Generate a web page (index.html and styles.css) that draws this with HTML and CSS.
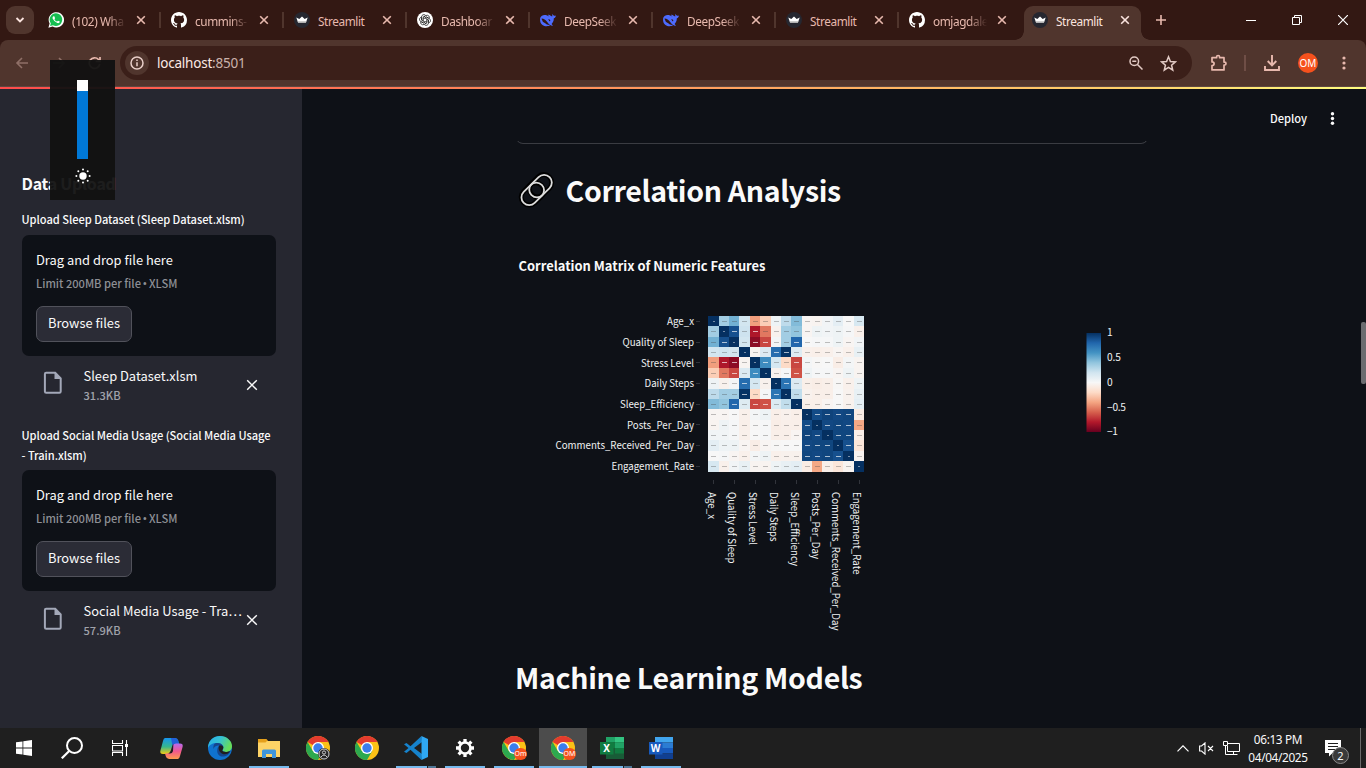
FILE: index.html
```html
<!DOCTYPE html>
<html lang="en">
<head>
<meta charset="utf-8">
<title>Streamlit</title>
<link rel="stylesheet" href="styles.css">
</head>
<body>
<svg class="defs" width="0" height="0">
  <symbol id="i-close" viewBox="0 0 10 10"><path d="M1.200 1.200l7.600 7.600M8.800 1.200L1.200 8.800" fill="none" stroke="currentColor" stroke-width="1.600"/></symbol>
  <symbol id="i-del" viewBox="0 0 12 12"><path d="M1.200 1.200l9.600 9.600M10.800 1.200L1.200 10.800" fill="none" stroke="#fafafa" stroke-width="1.400"/></symbol>
  <symbol id="i-github" viewBox="0 0 16 16"><path fill="#fff" d="M8 0C3.58 0 0 3.58 0 8c0 3.54 2.29 6.53 5.47 7.59.4.07.55-.17.55-.38 0-.19-.01-.82-.01-1.49-2.01.37-2.53-.49-2.69-.94-.09-.23-.48-.94-.82-1.13-.28-.15-.68-.52-.01-.53.63-.01 1.08.58 1.23.82.72 1.21 1.87.87 2.33.66.07-.52.28-.87.51-1.07-1.78-.2-3.64-.89-3.64-3.95 0-.87.31-1.59.82-2.15-.08-.2-.36-1.02.08-2.12 0 0 .67-.21 2.2.82.64-.18 1.32-.27 2-.27s1.36.09 2 .27c1.53-1.04 2.2-.82 2.2-.82.44 1.1.16 1.92.08 2.12.51.56.82 1.27.82 2.15 0 3.07-1.87 3.75-3.65 3.95.29.25.54.73.54 1.48 0 1.07-.01 1.93-.01 2.2 0 .21.15.46.55.38A8.01 8.01 0 0 0 16 8c0-4.42-3.58-8-8-8z"/></symbol>
  <symbol id="i-crown" viewBox="0 0 16 16"><circle cx="8" cy="8" r="8" fill="#262730"/><path d="M2.300 5.400l3 1.500L8 4.400l2.700 2.500 3-1.500-1.700 5.200H4z" fill="#fff"/><path d="M3.700 9.300h8.600l-.4 1.400H4.100z" fill="#bbb"/></symbol>
  <symbol id="i-deepseek" viewBox="0 0 16 16"><path fill="#4d6bfe" d="M15.900 3.400c-.8.5-1.300.5-2 .2-.8-.4-1-.9-1.600-1.900-.1 1.100-.2 1.900.3 2.600-.8.1-1.200-.1-1.900-.6C9.500 2.900 8.600 2.600 7.800 3c.6.5 1.300 1 1.600 1.600C6.800 2.900 3.900 2.300 1.600 4 .2 5-.2 7 .2 9.200c.6 3.200 3.400 5 6.400 5 1.600 0 2.600-.4 3.700-1.200.8.7 1.700.8 2.800.6-.4-.6-.9-1-1.500-1.700 1.500-1.700 2.300-3.300 2.200-5.600 1.300-.6 2-1.300 2.100-2.900z"/><path fill="#331813" d="M1.600 6.500c2.300.1 4 1.400 5.600 3.500 1 1.300 1.800 2.200 2.800 2.900-2.200.3-3.500-.6-4.700-1.700C4 10 3 10.500 2.700 9.400 2.300 8 1.600 7.800 1.600 6.500zM8.200 7.300c1-.4 1.900.3 2.200 1.600-.5.1-.7.3-1 .4-.2-1-.9-1.200-1.200-2z"/></symbol>
  <symbol id="i-file" viewBox="0 0 20 24"><path d="M3.200 1.700h9l5.500 5.600v13.200q0 1.300-1.300 1.300H3.200q-1.300 0-1.300-1.300V3q0-1.300 1.300-1.300z" fill="none" stroke="#a3a8b8" stroke-width="2"/><path d="M11.500 1.500v6.600h6.500z" fill="#a3a8b8"/></symbol>
  <symbol id="i-chrome" viewBox="0 0 24 24"><circle cx="12" cy="12" r="12" fill="#fbc116"/><path d="M12 12L1.600 6A12 12 0 0 1 22.400 6H12z" fill="#e33b2e"/><path d="M1.600 6A12 12 0 0 0 12 24L17.200 15 12 12 6.800 15z" fill="#2da94f"/><circle cx="12" cy="12" r="6" fill="#fff"/><circle cx="12" cy="12" r="4.700" fill="#3b7ded"/></symbol>
</svg>

<header class="browser">
  <div class="tabstrip">
    <div class="tabsearch"><svg width="10" height="10" viewBox="0 0 10 10"><path d="M1.500 3L5 6.500 8.500 3" fill="none" stroke="#fbe4df" stroke-width="1.800"/></svg></div>
    <div class="tab sep"><svg class="fav" viewBox="0 0 16 16"><path d="M.4 15.700l1.200-4.100A7.700 7.700 0 1 1 4.600 14.600z" fill="#fff"/><path d="M2.100 13.900l.7-2.600A6.300 6.300 0 1 1 5 13.200z" fill="#16bf51"/><path d="M5.500 4.200c-1 .5-1.200 1.700-.6 2.900a8.300 8.300 0 0 0 4.400 4c1.300.4 2.300-.2 2.500-1.500L10 8.700l-.9.900C7.900 9.200 7 8.300 6.400 7.200l.7-.9-.8-2z" fill="#fff"/></svg><span class="ttl fade">(102) Wha</span><svg class="x"><use href="#i-close"/></svg></div>
    <div class="tab sep"><svg class="fav"><use href="#i-github"/></svg><span class="ttl fade">cummins-</span><svg class="x"><use href="#i-close"/></svg></div>
    <div class="tab sep"><svg class="fav"><use href="#i-crown"/></svg><span class="ttl">Streamlit</span><svg class="x"><use href="#i-close"/></svg></div>
    <div class="tab sep"><svg class="fav" viewBox="0 0 16 16"><circle cx="8" cy="8" r="8" fill="#fff"/><g fill="none" stroke="#222" stroke-width=".8"><g id="petal"><path d="M6.200 9V5.200L9 3.500c2-1 4 .9 3.200 2.800M6.200 5.200L8 4.200"/></g><use href="#petal" transform="rotate(60 8 8)"/><use href="#petal" transform="rotate(120 8 8)"/><use href="#petal" transform="rotate(180 8 8)"/><use href="#petal" transform="rotate(240 8 8)"/><use href="#petal" transform="rotate(300 8 8)"/></g></svg><span class="ttl fade">Dashboar</span><svg class="x"><use href="#i-close"/></svg></div>
    <div class="tab sep"><svg class="fav"><use href="#i-deepseek"/></svg><span class="ttl fade">DeepSeek</span><svg class="x"><use href="#i-close"/></svg></div>
    <div class="tab sep"><svg class="fav"><use href="#i-deepseek"/></svg><span class="ttl fade">DeepSeek</span><svg class="x"><use href="#i-close"/></svg></div>
    <div class="tab sep"><svg class="fav"><use href="#i-crown"/></svg><span class="ttl">Streamlit</span><svg class="x"><use href="#i-close"/></svg></div>
    <div class="tab"><svg class="fav"><use href="#i-github"/></svg><span class="ttl fade">omjagdale</span><svg class="x"><use href="#i-close"/></svg></div>
    <div class="tab active"><svg class="fav"><use href="#i-crown"/></svg><span class="ttl">Streamlit</span><svg class="x"><use href="#i-close"/></svg></div>
    <svg class="newtab" viewBox="0 0 12 12"><path d="M6 1v10M1 6h10" stroke="#e8b9ae" stroke-width="1.600"/></svg>
    <div class="winctl">
      <svg width="10" height="10"><path d="M0 5.500h10" stroke="#fff"/></svg>
      <svg width="10" height="10" viewBox="0 0 10 10"><path d="M.5 2.500h7v7h-7zM2.500 2.500v-2h7v7h-2" fill="none" stroke="#fff"/></svg>
      <svg width="10" height="10" viewBox="0 0 10 10"><path d="M0 0l10 10M10 0L0 10" stroke="#fff" stroke-width="1.200"/></svg>
    </div>
  </div>
  <div class="toolbar">
    <svg class="nav" viewBox="0 0 14 14"><path d="M13 7H2M7 2L2 7l5 5" fill="none" stroke="#8f6f67" stroke-width="1.600"/></svg>
    <svg class="nav" viewBox="0 0 14 14"><path d="M1 7h11M7 2l5 5-5 5" fill="none" stroke="#8f6f67" stroke-width="1.600"/></svg>
    <svg class="nav" viewBox="0 0 14 14"><path d="M11.800 8A5.300 5.300 0 1 1 10.500 3.500L12 5M12 1v4.300H7.700" fill="none" stroke="#e8b9ae" stroke-width="1.700"/></svg>
    <div class="omnibox">
      <span class="info"><svg width="14" height="14" viewBox="0 0 14 14"><circle cx="7" cy="7" r="6" fill="none" stroke="#e9cfc9" stroke-width="1.500"/><path d="M7 6.200v4M7 3.500v1.500" stroke="#e9cfc9" stroke-width="1.500"/></svg></span>
      <span class="url">localhost<i>:8501</i></span>
      <svg class="mag" viewBox="0 0 14 14"><circle cx="5.300" cy="5.300" r="4.300" fill="none" stroke="#e3cbc5" stroke-width="1.500"/><path d="M3.300 5.300h4M8.500 8.500l5 5" stroke="#e3cbc5" stroke-width="1.500"/></svg>
      <svg class="star" viewBox="0 0 16 16"><path d="M8 1.700l1.800 4.400 4.700.4-3.600 3.100 1.100 4.600L8 11.700l-4 2.500 1.100-4.600-3.600-3.100 4.700-.4z" fill="none" stroke="#e3cbc5" stroke-width="1.400"/></svg>
    </div>
    <svg class="ext" viewBox="0 0 18 18"><path d="M2 3.700h4.600V3q0-1.500 1.500-1.500T9.600 3v.7H14v4.400h.6q1.400 0 1.400 1.400T14.600 11H14v4.900H2v-4.300c2.800 0 2.800-3.700 0-3.700z" fill="none" stroke="#e8b9ae" stroke-width="1.700" stroke-linejoin="round"/></svg>
    <span class="bar"></span>
    <svg class="dl" viewBox="0 0 16 16"><path d="M8 0v10M3.700 6L8 10.300 12.300 6M1 11v4h14v-4" fill="none" stroke="#e8b9ae" stroke-width="1.900"/></svg>
    <span class="avatar">OM</span>
    <svg class="kebab" viewBox="0 0 4 14"><g fill="#e8b9ae"><circle cx="2" cy="2" r="1.600"/><circle cx="2" cy="7" r="1.600"/><circle cx="2" cy="12" r="1.600"/></g></svg>
  </div>
</header>
<div class="rainbow"></div>

<div class="app">
  <aside class="sidebar">
    <h2 class="side-title">Data Upload</h2>
    <label class="lbl">Upload Sleep Dataset (Sleep Dataset.xlsm)</label>
    <section class="drop">
      <p class="drop-t">Drag and drop file here</p>
      <p class="drop-s">Limit 200MB per file <span class="dot">•</span> XLSM</p>
      <button class="browse">Browse files</button>
    </section>
    <div class="file">
      <svg class="doc"><use href="#i-file"/></svg>
      <div class="meta"><p class="name">Sleep Dataset.xlsm</p><p class="size">31.3KB</p></div>
      <svg class="del"><use href="#i-del"/></svg>
    </div>
    <label class="lbl two">Upload Social Media Usage (Social Media Usage<br>- Train.xlsm)</label>
    <section class="drop second">
      <p class="drop-t">Drag and drop file here</p>
      <p class="drop-s">Limit 200MB per file <span class="dot">•</span> XLSM</p>
      <button class="browse">Browse files</button>
    </section>
    <div class="file">
      <svg class="doc low"><use href="#i-file"/></svg>
      <div class="meta"><p class="name">Social Media Usage - Tra…</p><p class="size">57.9KB</p></div>
      <svg class="del"><use href="#i-del"/></svg>
    </div>
  </aside>
  <main class="main">
    <div class="apphead"><span class="deploy">Deploy</span><svg width="5" height="13" viewBox="0 0 5 13"><g fill="#fafafa"><circle cx="2.500" cy="1.800" r="1.700"/><circle cx="2.500" cy="6.500" r="1.700"/><circle cx="2.500" cy="11.200" r="1.700"/></g></svg></div>
    <div class="frame"></div>
    <h2 class="h2 link-h"><svg class="link" viewBox="0 0 36 36"><g fill="none" transform="rotate(-45 18 18)"><g stroke="#000" stroke-width="5"><rect x="-.5" y="9.500" width="25" height="16" rx="8"/><rect x="11" y="9.500" width="25" height="16" rx="8"/></g><g stroke="#dcdcdc" stroke-width="1.800"><rect x="-.5" y="10" width="25.500" height="15.500" rx="7.700"/><rect x="10.500" y="10" width="25.500" height="15.500" rx="7.700"/></g></g></svg><span>Correlation Analysis</span></h2>
    <svg class="chart" width="632" height="400" viewBox="516 244 632 400">
      <defs><linearGradient id="rdbu" x1="0" y1="0" x2="0" y2="1"><stop offset="0" stop-color="#053061"/><stop offset=".1" stop-color="#2166ac"/><stop offset=".2" stop-color="#4393c3"/><stop offset=".3" stop-color="#92c5de"/><stop offset=".4" stop-color="#d1e5f0"/><stop offset=".5" stop-color="#f7f7f7"/><stop offset=".6" stop-color="#fddbc7"/><stop offset=".7" stop-color="#f4a582"/><stop offset=".8" stop-color="#d6604d"/><stop offset=".9" stop-color="#b2182b"/><stop offset="1" stop-color="#67001f"/></linearGradient></defs>
      <text class="ctitle" x="518.500" y="271" textLength="247" lengthAdjust="spacingAndGlyphs">Correlation Matrix of Numeric Features</text>
      <g id="heat"></g>
      <g id="axes" class="axis"></g>
      <rect x="1086.500" y="333" width="14.500" height="99" fill="url(#rdbu)"/>
      <g class="axis"><text x="1107" y="336">1</text><text x="1107" y="361" textLength="14">0.5</text><text x="1107" y="386">0</text><text x="1107" y="411" textLength="19">−0.5</text><text x="1107" y="435" textLength="11">−1</text></g>
    </svg>
    <h2 class="h2 ml">Machine Learning Models</h2>
    <span class="scroll"></span>
  </main>
</div>

<footer class="taskbar">
  <div class="slot"><svg width="16" height="16" viewBox="0 0 16 16"><path fill="#fff" d="M0 2.300L6.500 1.400V7.600H0zM7.300 1.300L16 0v7.600H7.300zM0 8.400h6.500v6.200L0 13.700zM7.300 8.400H16V16l-8.700-1.300z"/></svg></div>
  <div class="slot"><svg width="22" height="22" viewBox="0 0 22 22"><circle cx="13.500" cy="8.500" r="7.500" fill="none" stroke="#fff" stroke-width="2"/><path d="M8.200 14L.8 21.300" stroke="#fff" stroke-width="2.200"/></svg></div>
  <div class="slot"><svg width="16" height="16" viewBox="0 0 16 16"><path d="M.5 0v3.500h10V0M.5 16v-3.500h10V16M.500 5.500h10v5.500H.5zM14.500 0v16" fill="none" stroke="#fff" stroke-width="1.100"/><path d="M13 4h3v3h-3z" fill="#fff"/></svg></div>
  <div class="apps">
    <div class="slot"><svg width="23" height="21" viewBox="0 0 23 21"><defs><linearGradient id="cpa" x1="0" y1="0" x2="0" y2="1"><stop offset="0" stop-color="#1795ef"/><stop offset=".55" stop-color="#36b78d"/><stop offset="1" stop-color="#f3cd13"/></linearGradient><linearGradient id="cpb" x1="0" y1="1" x2="0" y2="0"><stop offset="0" stop-color="#ff9c4c"/><stop offset=".5" stop-color="#f2588d"/><stop offset="1" stop-color="#b46bf0"/></linearGradient></defs><path d="M5 0h10q2.500 0 3.200 2.500L19 6h-4q-2 0-2.800 2.500L11 13q-1 3-4 3H3q-3.500 0-2.500-3.700L3 3q.7-3 2-3z" fill="url(#cpa)"/><path d="M11 0h4q2.500 0 3.200 2.500L19 6h-4q-1.700 0-2.500 2z" fill="#2260d8"/><path d="M18 21H9q-2.500 0-3.200-2.700L5 15.500h2.500Q10 15.500 11 12l1.200-4Q13 5.500 16 5.500h4q3.500 0 2.500 3.700L20 18q-.7 3-2 3z" fill="url(#cpb)"/><path d="M11 12l1.200-4q.4-1.300 1.200-1.900L13 13q-.6 2.500-3 2.500H8.500Q10.300 14.500 11 12z" fill="#1f1f1f"/></svg></div>
    <div class="slot"><svg width="24" height="24" viewBox="0 0 24 24"><defs><linearGradient id="eg" x1="0" y1="0" x2="1" y2=".4"><stop offset="0" stop-color="#28aee8"/><stop offset=".5" stop-color="#35c1d4"/><stop offset="1" stop-color="#67dd59"/></linearGradient></defs><circle cx="12" cy="12" r="12" fill="#0f72cf"/><path d="M0 11C.5 4.500 5.500 0 12 0c7 0 12 5 12 10 0 4-3 6-6 6-2.500 0-3.700-.8-3.700-1.700 0-.8 1-1 1-3C15.300 8.500 12 7 8.700 7 4.500 7 1 9 0 12z" fill="url(#eg)"/><path d="M8.700 7C12 7 15.300 8.500 15.300 11.300c0 2-1 2.200-1 3 0 .9 1.200 1.700 3.700 1.700 2.500 0 4-1 4.600-1.300-1.600 5.600-8 7-11 5S8.500 12.500 11 9.500C9 9.300 6.500 10 5.500 13 5 9 6.500 7 8.700 7z" fill="#15458c"/><path d="M11.500 9.600c1.700-.3 3.800.2 3.800 1.900 0 1.800-1 2-1 2.800 0 .9 1.200 1.700 3.700 1.700 2.500 0 3.700-.7 4.300-1.200-1.500 3.200-5 4.200-7.500 3.200-4-1.500-5-5.800-3.300-8.400z" fill="#1f1f1f"/></svg></div>
    <div class="slot run"><svg width="22" height="19" viewBox="0 0 22 19"><path d="M0 0h8.500l2 2.500H0z" fill="#e5a01b"/><path d="M0 2h22v16H0z" fill="#fdd366"/><path d="M0 2h9L7.500 3.500H0z" fill="#e5a01b"/><path d="M4 19v-7q0-1.500 1.500-1.500h11q1.500 0 1.500 1.500v7h-4v-4H8v4z" fill="#3e95dc"/></svg></div>
    <div class="slot"><svg width="24" height="24"><use href="#i-chrome"/><circle cx="18" cy="18" r="6" fill="#252525"/><circle cx="18" cy="18" r="5" fill="none" stroke="#ccc"/><circle cx="18" cy="16.500" r="1.600" fill="none" stroke="#ccc"/><path d="M15 21q3-4 6 0" fill="none" stroke="#ccc"/></svg></div>
    <div class="slot"><svg width="24" height="24"><use href="#i-chrome"/></svg></div>
    <div class="slot run multi"><svg width="24" height="24" viewBox="0 0 24 24"><path d="M17.500 0L6.500 10.200 2.500 7 0 8.200 4.500 12 0 15.800 2.500 17l4-3.200L17.500 24l.5-6-8-6 8-6z" fill="#1683cd"/><path d="M17.500 0L24 3v18l-6.500 3z" fill="#2fa8f3"/></svg></div>
    <div class="slot run"><svg width="20" height="20" viewBox="-10 -10 20 20"><circle r="5.500" fill="none" stroke="#fff" stroke-width="2.600"/><g stroke="#fff" stroke-width="3.300"><path d="M0-6v-3M0 6v3M-6 0h-3M6 0h3M4.300-4.300l2.100-2.100M-4.300-4.300l-2.100-2.100M4.300 4.300l2.100 2.100M-4.300 4.300l-2.100 2.100"/></g></svg></div>
    <div class="slot run"><span class="ic"><svg width="24" height="24"><use href="#i-chrome"/></svg><b class="pill">Om</b></span></div>
    <div class="slot run on"><span class="ic"><svg width="24" height="24"><use href="#i-chrome"/></svg><b class="pill">OM</b></span></div>
    <div class="slot run multi"><span class="ic"><svg width="24" height="22" viewBox="0 0 24 22"><path d="M6 0h18v5.500H6z" fill="#21a366"/><path d="M15 0h9v5.500h-9z" fill="#33c481"/><path d="M6 5.500h18V11H6z" fill="#107c41"/><path d="M15 5.500h9V11h-9z" fill="#21a366"/><path d="M6 11h18v11H6z" fill="#185c37"/><path d="M15 11h9v5.500h-9z" fill="#107c41"/><path d="M0 5h13.500v12.500H0z" fill="#107c41"/></svg><b class="ltr">X</b></span></div>
    <div class="slot run"><span class="ic"><svg width="24" height="22" viewBox="0 0 24 22"><path d="M6 0h18v5.500H6z" fill="#41a5ee"/><path d="M6 5.500h18V11H6z" fill="#2b7cd3"/><path d="M6 11h18v5.500H6z" fill="#185abd"/><path d="M6 16.500h18V22H6z" fill="#103f91"/><path d="M0 5h13.500v12.500H0z" fill="#185abd"/></svg><b class="ltr">W</b></span></div>
  </div>
  <div class="tray">
    <svg width="12" height="7" viewBox="0 0 12 7"><path d="M.5 6.300L6 .8l5.500 5.500" fill="none" stroke="#fff" stroke-width="1.200"/></svg>
    <svg width="15" height="13" viewBox="0 0 15 13"><path d="M.6 4h2L6 .9v11.200L2.600 9h-2zM9 4l5 5M14 4L9 9" fill="none" stroke="#fff" stroke-width="1.100"/></svg>
    <svg width="17" height="14" viewBox="0 0 17 14"><path d="M4.500 2.500h12v8h-12M4.500 5v5.500M10.500 10.500v3M7 13.500h7.500M2.500 5v8.500H7" fill="none" stroke="#fff"/><path d="M.5.500h4v4h-4z" fill="none" stroke="#fff"/></svg>
    <div class="clock"><span>06:13 PM</span><span class="date">04/04/2025</span></div>
    <div class="note"><svg width="17" height="17" viewBox="0 0 17 17"><path d="M0 0h16v13H7.500L4 16.500V13H0z" fill="#fff"/><path d="M3 3.500h10M3 6.500h10M3 9.500h7" stroke="#1f1f1f"/></svg><b class="cnt">2</b></div>
    <span class="desk"></span>
  </div>
</footer>

<div class="bright">
  <div class="track"><div class="thumb"></div></div>
  <svg width="16" height="16" viewBox="-8 -8 16 16"><circle r="3.700" fill="#fff"/><g fill="#fff"><circle cy="-6.600" r="1"/><circle cy="6.600" r="1"/><circle cx="6.600" r="1"/><circle cx="-6.600" r="1"/><circle cx="4.700" cy="4.700" r="1"/><circle cx="-4.700" cy="4.700" r="1"/><circle cx="4.700" cy="-4.700" r="1"/><circle cx="-4.700" cy="-4.700" r="1"/></g></svg>
</div>
<script src="chart.js"></script>
</body>
</html>
```

FILE: styles.css
```css
* { box-sizing: border-box; }
body { margin: 0; width: 1366px; height: 768px; overflow: hidden; position: relative; background: #0e1117; color: #fafafa; font-family: "Noto Sans CJK SC", "Noto Sans", sans-serif; }
p, h2 { margin: 0; }
svg { display: block; flex: none; }
.defs { position: absolute; }

.browser { height: 87px; background: #331813; font-family: "Noto Sans", "Open Sans", sans-serif; }
.tabstrip { height: 40px; display: flex; align-items: center; padding-left: 6px; }
.tabsearch { width: 28px; height: 28px; border-radius: 9px; background: #50352d; display: flex; align-items: center; justify-content: center; margin-right: 6px; }
.tab { width: 123px; height: 34px; margin-top: 6px; padding: 0 0 6px 8px; display: flex; align-items: center; flex: none; }
.tab.sep { background: linear-gradient(#50352d, #50352d) 119px 6px / 2px 16px no-repeat; }
.fav { width: 16px; height: 16px; margin-right: 8px; }
.ttl { width: 54px; flex: none; padding-top: 1px; white-space: nowrap; font-size: 11.800px; line-height: 16px; letter-spacing: -0.4px; color: #e8b9ae; }
.fade { -webkit-mask-image: linear-gradient(90deg, #000 65%, transparent 100%); mask-image: linear-gradient(90deg, #000 65%, transparent 100%); }
.x { width: 10px; height: 10px; margin-left: 10px; color: #e8b9ae; }
.tab.active { width: 117px; position: relative; background: #50352d; border-radius: 9px 9px 0 0; }
.tab.active .ttl, .tab.active .x { color: #fbe4df; }
.tab.active::before, .tab.active::after { content: ""; position: absolute; bottom: 0; width: 9px; height: 9px; }
.tab.active::before { left: -9px; background: radial-gradient(circle at 0 0, transparent 8.5px, #50352d 9px); }
.tab.active::after { right: -9px; background: radial-gradient(circle at 100% 0, transparent 8.5px, #50352d 9px); }
.newtab { width: 12px; height: 12px; margin-left: 14px; }
.winctl { margin-left: auto; padding-right: 18px; display: flex; gap: 36px; }
.toolbar { height: 47px; background: #50352d; border-radius: 8px 8px 0 0; border-bottom: 1px solid #5d4740; display: flex; align-items: center; padding-left: 15px; }
.nav { width: 14px; height: 14px; margin-right: 22.500px; }
.omnibox { width: 1072px; height: 34px; margin-left: -4.500px; border-radius: 17px; background: #3b1f19; display: flex; align-items: center; padding-left: 5px; }
.info { width: 24px; height: 24px; border-radius: 12px; background: #50352d; display: flex; align-items: center; justify-content: center; margin-right: 8px; }
.url { font-size: 13.500px; line-height: 20px; color: #fbe9e5; width: 971.500px; letter-spacing: -0.22px; }
.url i { font-style: normal; color: #cbb2ab; }
.mag { width: 14px; height: 14px; margin-right: 17px; }
.star { width: 17px; height: 17px; }
.ext { width: 18px; height: 18px; margin-left: 18px; }
.bar { width: 2px; height: 16px; background: #6f4e46; margin: 0 18px 0 16px; }
.dl { width: 16px; height: 16px; }
.avatar { width: 20px; height: 20px; border-radius: 10px; background: #f6511d; color: #fff; font-size: 10px; line-height: 20px; text-align: center; margin: 0 24px 0 18px; }
.kebab { width: 4px; height: 14px; }
.rainbow { height: 2px; background: linear-gradient(90deg, #ff4b4b, #ffd16a 82%, #fffd80); }

.app { display: flex; height: 639px; }
.sidebar { width: 302px; background: #262730; padding: 82px 26px 0 21.500px; font-weight: 500; }
.side-title { font-size: 16px; line-height: 24px; font-weight: 700; letter-spacing: -0.25px; }
.lbl { display: block; margin-top: 14px; font-size: 11.100px; line-height: 20px; letter-spacing: -0.03px; white-space: nowrap; }
.drop { margin: 6px 0 0 .5px; height: 121px; background: #0e1117; border-radius: 7px; padding: 14px; }
.drop-t { font-size: 12.900px; line-height: 22px; font-weight: 400; }
.drop-s { margin-top: 2px; font-size: 11.100px; line-height: 20px; color: #8d8f95; }
.dot { font-family: "Noto Sans", sans-serif; margin: 0 -.6px; }
.browse { display: block; margin-top: 12px; width: 96px; height: 36px; padding: 0 0 2px; border: 1px solid #51525b; border-radius: 7px; background: #2b2c36; color: #fafafa; font: 400 12.900px/20px "Noto Sans CJK SC", sans-serif; }
.file { height: 70px; display: flex; padding: 9px 18px 0 21.500px; }
.doc { width: 20px; height: 24px; margin: 6px 20px 0 0; }
.doc.low { margin-top: 7px; }
.meta { flex: 1; white-space: nowrap; padding-left: .5px; }
.name { font-size: 12.900px; line-height: 22px; font-weight: 400; }
.size { font-size: 11.100px; line-height: 16px; color: #a0a2aa; }
.del { width: 12px; height: 12px; margin-top: 14px; }
.lbl.two { margin-top: -1px; }
.drop.second { margin-top: 5px; }

.main { flex: 1; position: relative; padding-left: 214px; }
.apphead { position: absolute; left: 0; right: 0; top: 0; height: 52px; background: #0e1117; display: flex; align-items: center; justify-content: flex-end; padding: 7px 31.500px 0 0; gap: 22.500px; }
.deploy { font-size: 11.100px; line-height: 18px; font-weight: 500; padding-bottom: 1px; }
.frame { width: 632px; height: 55px; border: 1px solid #3a3c42; border-top: 0; border-radius: 0 0 7px 7px; }
.h2 { font-size: 28.500px; font-weight: 700; line-height: 40px; letter-spacing: -0.32px; white-space: nowrap; display: flex; align-items: center; }
.link-h { margin-top: 26px; height: 40px; }
.link { width: 36px; height: 36px; margin: 0 10.500px 0 3px; overflow: visible; }
.chart { margin-top: 34px; }
.ctitle { font-size: 12.800px; font-weight: 700; fill: #fafafa; }
.axis { font-size: 10.200px; fill: #f0f1f3; }
.ml { margin: 13px 0 0 -1px; }
.scroll { position: absolute; right: 0; top: 233px; width: 5px; height: 62px; border-radius: 2px; background: #6b6c70; }

.taskbar { height: 40px; background: #1f1f1f; display: flex; font-family: "Noto Sans", "Open Sans", sans-serif; }
.slot { width: 48px; height: 40px; display: flex; align-items: center; justify-content: center; flex: none; }
.apps { display: flex; gap: 1px; margin-left: 3px; }
.run { background: linear-gradient(#76b9ed, #76b9ed) 4px 38px / 40px 2px no-repeat; }
.run.multi { background: linear-gradient(90deg, #76b9ed 31px, #1f1f1f 31px, #1f1f1f 32px, #4f7797 32px) 4px 38px / 40px 2px no-repeat; }
.run.on { background: linear-gradient(#76b9ed, #76b9ed) 0 38px / 48px 2px no-repeat #4c4c4c; }
.ic { position: relative; }
.pill { position: absolute; left: 12px; top: 12px; width: 13px; height: 12px; border-radius: 6px; background: #f6511d; color: #fff; font-size: 7px; line-height: 12px; font-weight: 400; text-align: center; }
.ltr { position: absolute; left: 0; top: 5px; width: 13px; font-size: 10px; line-height: 12px; text-align: center; color: #fff; }
.tray { margin-left: auto; display: flex; align-items: center; }
.tray > svg:nth-child(1) { margin-right: 10px; }
.tray > svg:nth-child(2) { margin-right: 9px; }
.clock { width: 78px; padding-right: 2px; display: flex; flex-direction: column; align-items: center; font-size: 11.800px; line-height: 18px; letter-spacing: -0.35px; }
.note { position: relative; margin: 0 11px 0 7px; width: 24px; height: 17px; }
.cnt { position: absolute; left: 7px; top: 7px; width: 17px; height: 17px; border-radius: 9px; border: 1px solid #8a8a8a; background: #3a3a3a; font-size: 11px; font-weight: 400; line-height: 15px; text-align: center; }
.desk { width: 6px; height: 40px; border-left: 1px solid #6a6a6a; }

.bright { position: absolute; left: 50px; top: 60px; width: 65px; height: 140px; background: rgba(17, 17, 17, .95); display: flex; flex-direction: column; align-items: center; padding-top: 20px; }
.track { width: 11px; height: 79px; background: #0078d7; margin-bottom: 9px; }
.thumb { height: 11px; background: #fff; }
```

FILE: chart.js
```js
const NS = "http://www.w3.org/2000/svg";
const corr = [
  [1],
  [.35, 1],
  [.48, .88, 1],
  [.19, .21, .19, 1],
  [-.42, -.81, -.9, -.03, 1],
  [-.25, -.53, -.67, .14, .63, 1],
  [.05, -.04, .02, .77, .18, -.04, 1],
  [.26, .35, .35, .99, -.2, .01, .74, 1],
  [.44, .40, .8, .13, -.67, -.64, .14, .25, 1],
  [-.02, -.02, 0, -.05, .02, .05, -.06, -.04, -.06, 1],
  [-.03, .05, .01, -.06, -.01, .01, -.07, -.06, -.06, .9, 1],
  [.03, .03, .01, -.05, 0, .01, -.06, -.06, -.02, .93, .91, 1],
  [.1, .05, .05, -.02, -.07, -.02, -.01, 0, 0, .91, .92, .92, 1],
  [0, .01, -.02, -.05, .02, .05, -.05, -.04, -.04, .92, .91, .92, .88, 1],
  [.17, -.05, .03, .08, -.03, -.03, .05, .08, .1, -.08, -.39, -.06, -.12, -.03, 1]
];
const scale = [[103,0,31],[178,24,43],[214,96,77],[244,165,130],[253,219,199],[247,247,247],[209,229,240],[146,197,222],[67,147,195],[33,102,172],[5,48,97]];
function color(v) {
  const t = (v + 1) * 5, i = Math.min(9, Math.floor(t)), f = t - i;
  return "rgb(" + scale[i].map((c, k) => Math.round(c + (scale[i + 1][k] - c) * f)).join(",") + ")";
}
function add(parent, tag, attrs, text) {
  const el = document.createElementNS(NS, tag);
  for (const k in attrs) el.setAttribute(k, attrs[k]);
  if (text) el.textContent = text;
  parent.appendChild(el);
}
const heat = document.getElementById("heat"), axes = document.getElementById("axes");
const X = 708.3, Y = 315.9, S = 10.38;
for (let r = 0; r < 15; r++) for (let c = 0; c < 15; c++) {
  const v = r >= c ? corr[r][c] : corr[c][r];
  const x0 = Math.round(X + c * S), x1 = Math.round(X + (c + 1) * S), y0 = Math.round(Y + r * S), y1 = Math.round(Y + (r + 1) * S);
  add(heat, "rect", { x: x0, y: y0, width: x1 - x0, height: y1 - y0, fill: color(v) });
  const w = r === c ? 2 : 5;
  const light = Math.abs(v) > .6;
  add(heat, "rect", { x: Math.round((x0 + x1 - w) / 2), y: y0 + 5, width: w, height: 1, fill: light ? "#fff" : "#444", opacity: r === c ? .45 : light ? .65 : .33 });
}
[["Age_x", 27], ["Quality of Sleep", 71.5], ["Stress Level", 53], ["Daily Steps", 49.5], ["Sleep_Efficiency", 74], ["Posts_Per_Day", 67], ["Comments_Received_Per_Day", 138.5], ["Engagement_Rate", 82.5]].forEach(([name, len], i) => {
  const y = 321.3 + i * 20.7, x = 713.5 + i * 20.8;
  add(axes, "text", { x: 694 - len, y: y + 3.8, textLength: len, lengthAdjust: "spacingAndGlyphs" }, name);
  add(axes, "rect", { x: 696, y: Math.round(y - .5), width: 4, height: 1, fill: "#31343b" });
  add(axes, "rect", { x: Math.round(x - .5), y: 480, width: 1, height: 4, fill: "#31343b" });
  add(axes, "text", { transform: `translate(${x - 6} 492) rotate(90)`, textLength: len, lengthAdjust: "spacingAndGlyphs" }, name);
});
```
